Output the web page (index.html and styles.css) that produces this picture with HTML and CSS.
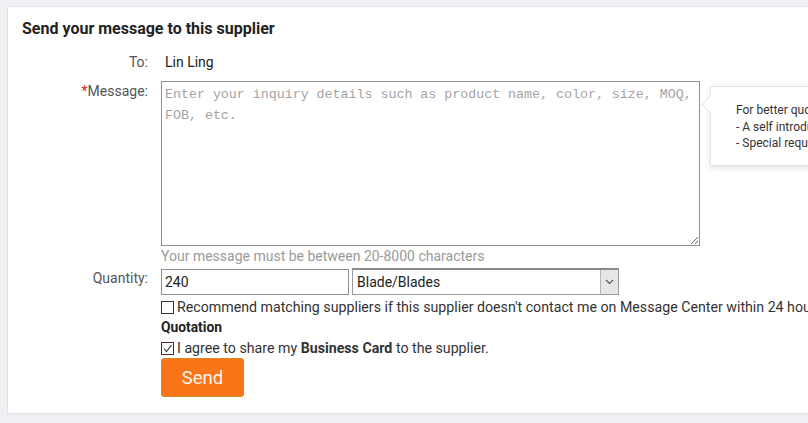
FILE: index.html
```html
<!DOCTYPE html>
<html>
<head>
<meta charset="utf-8">
<link rel="stylesheet" href="styles.css">
</head>
<body>
<div class="card">
  <h2 class="title">Send your message to this supplier</h2>
  <div class="row row-to">
    <div class="label">To:</div>
    <div class="value name">Lin Ling</div>
  </div>
  <div class="row row-msg">
    <div class="label"><span class="star">*</span>Message:</div>
    <div class="value msg-wrap">
      <textarea class="msg" placeholder="Enter your inquiry details such as product name, color, size, MOQ, FOB, etc."></textarea>
      <div class="hint">Your message must be between 20-8000 characters</div>
      <div class="tip">
        <div>For better quotation, please include:</div>
        <div>- A self introduction</div>
        <div>- Special requests, if any</div>
      </div>
    </div>
  </div>
  <div class="row row-qty">
    <div class="label">Quantity:</div>
    <div class="value qty">
      <input class="qty-input" type="text" value="240">
      <div class="select">
        <span class="select-text">Blade/Blades</span>
        <span class="select-btn"><svg width="9" height="6" viewBox="0 0 9 6"><path d="M1 1 L4.5 4.5 L8 1" fill="none" stroke="#555" stroke-width="1.1"/></svg></span>
      </div>
    </div>
  </div>
  <div class="row row-opts">
    <div class="label"></div>
    <div class="value opts">
      <div class="check-line"><span class="box"></span><span class="nowrap">Recommend matching suppliers if this supplier doesn't contact me on Message Center within 24 hours.</span></div>
      <div class="quotation">Quotation</div>
      <div class="check-line agree"><span class="box checked"><svg width="11" height="11" viewBox="0 0 11 11"><path d="M2 5.5 L4.5 8.5 L9.5 2" fill="none" stroke="#333" stroke-width="1.1"/></svg></span><span>I agree to share my <b>Business Card</b> to the supplier.</span></div>
      <button class="send">Send</button>
    </div>
  </div>
</div>
</body>
</html>
```

FILE: styles.css
```css
html, body {
  margin: 0;
  padding: 0;
  overflow: hidden;
}
body {
  background: #eff0f4;
  width: 808px;
  height: 423px;
  font-family: Roboto, "Liberation Sans", sans-serif;
  color: #333;
}
.card {
  margin: 6px 0 0 7px;
  width: 960px;
  background: #fff;
  border: 1px solid #e1e3ea;
  padding: 12px 0 16px 0;
  box-sizing: border-box;
}
.title {
  margin: 0 0 13px 14px;
  font-size: 16px;
  line-height: 20px;
  font-weight: 700;
  color: #222;
}
.row {
  display: flex;
  align-items: flex-start;
}
.label {
  width: 140px;
  flex: none;
  text-align: right;
  font-size: 14px;
  line-height: 20px;
  color: #555;
}
.star {
  color: #c8262f;
}
.value {
  margin-left: 13px;
  font-size: 14px;
  line-height: 20px;
}
.name {
  padding-left: 4px;
  color: #222;
}
.row-msg {
  margin-top: 9px;
}
.msg-wrap {
  position: relative;
}
.msg {
  display: block;
  width: 539px;
  height: 165px;
  box-sizing: border-box;
  margin: 0;
  border: 1px solid #8f8f8f;
  padding: 2px 3px;
  font-family: "Liberation Mono", monospace;
  font-size: 13.3px;
  line-height: 21px;
  resize: both;
  outline: none;
}
.msg::placeholder {
  color: #a3a3a3;
}
.hint {
  color: #9a9a9a;
  line-height: 20px;
  margin-top: 0;
}
.tip {
  position: absolute;
  left: 549px;
  top: 5px;
  width: 200px;
  height: 80px;
  box-sizing: border-box;
  background: #fff;
  border: 1px solid #e4e4e4;
  box-shadow: 0 2px 6px rgba(0,0,0,0.12);
  padding: 15px 0 0 25px;
  font-size: 12px;
  line-height: 16.5px;
  color: #333;
  white-space: nowrap;
}
.tip::before {
  content: "";
  position: absolute;
  left: -7px;
  top: 11px;
  width: 12px;
  height: 12px;
  background: #fff;
  border-left: 1px solid #e4e4e4;
  border-bottom: 1px solid #e4e4e4;
  transform: rotate(45deg);
}
.row-qty {
  margin-top: 2px;
}
.qty {
  display: flex;
  gap: 3px;
  align-items: flex-start;
}
.qty-input {
  width: 188px;
  height: 26px;
  box-sizing: border-box;
  margin: 1px 0 0 0;
  border: 1px solid #8f8f8f;
  padding: 0 3px;
  font-family: Roboto, "Liberation Sans", sans-serif;
  font-size: 14px;
  color: #222;
  outline: none;
}
.select {
  display: flex;
  width: 267px;
  height: 27px;
  box-sizing: border-box;
  border: 1px solid #9a9a9a;
  border-top: 2px solid #8a8a8a;
  background: #fff;
}
.select-text {
  flex: 1;
  padding-left: 4px;
  line-height: 24px;
  font-size: 14px;
  color: #222;
}
.select-btn {
  width: 17px;
  flex: none;
  background: #e6e6e6;
  border-left: 1px solid #b5b5b5;
  display: flex;
  align-items: center;
  justify-content: center;
}
.opts {
  display: flex;
  flex-direction: column;
  align-items: flex-start;
  margin-top: 3px;
}
.check-line {
  display: flex;
  align-items: center;
  gap: 3px;
  font-size: 14.2px;
  line-height: 18px;
  color: #333;
  white-space: nowrap;
}
.box {
  width: 13px;
  height: 13px;
  box-sizing: border-box;
  border: 1px solid #333;
  background: #fff;
  display: inline-flex;
  align-items: center;
  justify-content: center;
  flex: none;
}
.box.checked {
  border-color: #4a2a2a;
}
.quotation {
  font-size: 13.8px;
  font-weight: 700;
  line-height: 18px;
  margin-top: 2px;
  color: #222;
}
.agree {
  margin-top: 3px;
}
.send {
  margin-top: 1px;
  width: 83px;
  height: 39px;
  background: #fb7518;
  border: 1px solid #d7871f;
  border-radius: 3px;
  color: #fff3ef;
  font-family: Roboto, "Liberation Sans", sans-serif;
  font-size: 18.5px;
  padding: 0;
}
```
